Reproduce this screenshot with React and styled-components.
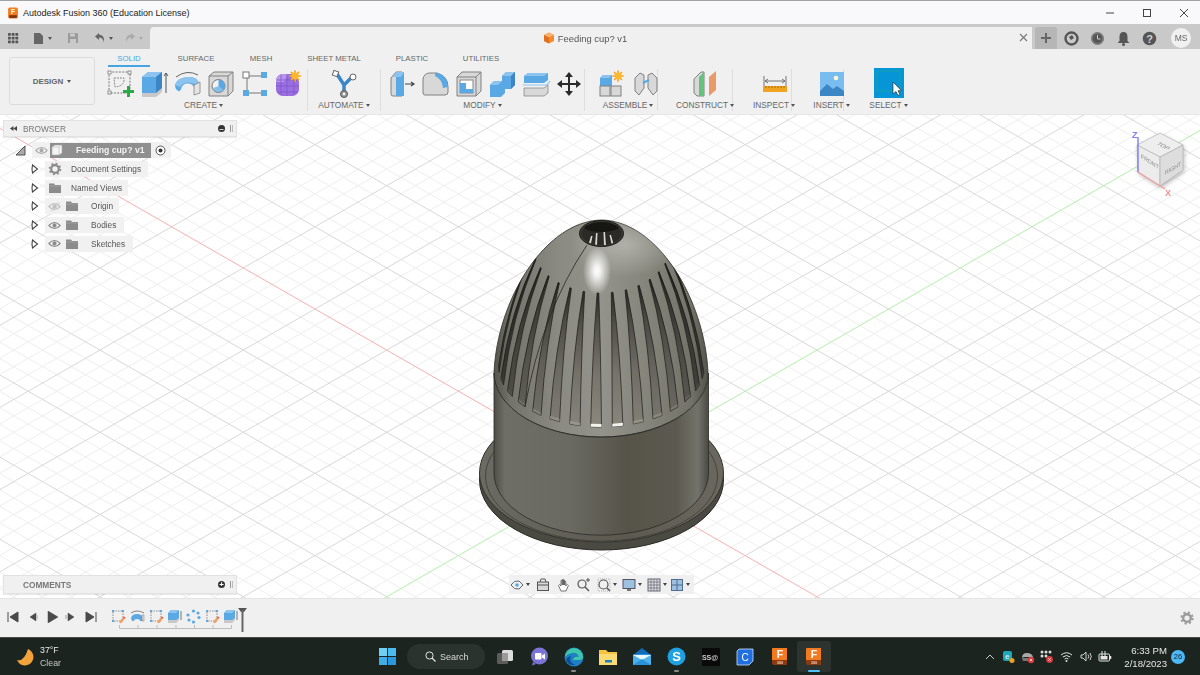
import styled, { createGlobalStyle } from 'styled-components'

const GlobalStyle = createGlobalStyle`
  html, body {
    margin: 0;
    padding: 0;
    background: #fff;
    font-family: "Liberation Sans", Arial, sans-serif;
  }
`;

const Page = styled.div`
  width: 1200px;
  height: 675px;
  display: flex;
  flex-direction: column;
  overflow: hidden;
  filter: blur(0.35px);
`;

/* ---------- title bar ---------- */
const TitleBar = styled.div`
  height: 23px;
  flex: none;
  border-top: 1px solid #a2a2a2;
  background: #f9f9fb;
  display: flex;
  align-items: center;
  padding-left: 7px;
  font-size: 9px;
  color: #222;
`;

const TitleText = styled.span`
  margin-left: 4px;
`;

const WindowButtons = styled.div`
  margin-left: auto;
  margin-right: -2px;
  display: flex;
`;

const WindowButton = styled.div`
  width: 37px;
  height: 23px;
  display: flex;
  align-items: center;
  justify-content: center;
`;

/* ---------- document tab strip ---------- */
const TabStrip = styled.div`
  height: 25px;
  flex: none;
  background: #c9c9c9;
  display: flex;
`;

const QuickBar = styled.div`
  width: 150px;
  flex: none;
  display: flex;
  align-items: center;
  padding: 3px 0 0 5px;
  box-sizing: border-box;
`;

const QuickButton = styled.div`
  width: ${p => p.$w}px;
  height: 22px;
  display: flex;
  align-items: center;
  justify-content: center;
  flex: none;
`;

const Caret = styled.span`
  display: inline-block;
  width: 0;
  height: 0;
  margin-left: ${p => p.$gap ?? 3}px;
  border-left: 2.5px solid transparent;
  border-right: 2.5px solid transparent;
  border-top: 3px solid ${p => p.$color || '#555'};
  vertical-align: middle;
`;

const DocTab = styled.div`
  width: 882px;
  flex: none;
  margin-top: 3px;
  background: #f0f0f0;
  border-radius: 4px 0 0 0;
  display: flex;
  align-items: center;
  justify-content: center;
  font-size: 9.4px;
  color: #555;
  position: relative;
  padding-right: 12px;
  box-sizing: border-box;
`;

const DocName = styled.span`
  margin-left: 3px;
`;

const DocClose = styled.span`
  position: absolute;
  right: 4px;
  top: 6px;
  display: flex;
`;

const PlusButton = styled.div`
  width: 22px;
  height: 22px;
  margin: 3px 0 0 3px;
  background: #b6b6b6;
  border-radius: 2px 2px 0 0;
  display: flex;
  align-items: center;
  justify-content: center;
`;

const UserBar = styled.div`
  display: flex;
  align-items: center;
  gap: 11px;
  padding: 3px 0 0 7px;
`;

const Avatar = styled.div`
  width: 20px;
  height: 20px;
  margin-left: 3px;
  border-radius: 50%;
  background: #f0f0f0;
  color: #666;
  font-size: 8.5px;
  display: flex;
  align-items: center;
  justify-content: center;
`;

/* ---------- ribbon ---------- */
const Ribbon = styled.div`
  height: 66px;
  flex: none;
  background: #f0f0f0;
  border-bottom: 1px solid #e6e6e6;
  box-sizing: border-box;
  display: flex;
  position: relative;
  z-index: 1;
`;

const DesignButton = styled.div`
  width: 86px;
  height: 48px;
  margin: 8px 0 0 9px;
  flex: none;
  box-sizing: border-box;
  border: 1px solid #dcdcdc;
  border-radius: 3px;
  display: flex;
  align-items: center;
  justify-content: center;
  font-size: 8px;
  font-weight: bold;
  color: #666;
`;

const RibbonMain = styled.div`
  margin-left: 5px;
  display: flex;
  flex-direction: column;
`;

const TabsRow = styled.div`
  height: 18px;
  display: flex;
  margin-left: 8px;
`;

const RibbonTab = styled.div`
  width: ${p => p.$w}px;
  height: 18px;
  box-sizing: border-box;
  padding-top: 5px;
  text-align: center;
  font-size: 7.8px;
  color: ${p => p.$active ? '#45a5e2' : '#666'};
  border-bottom: 2px solid ${p => p.$active ? '#45a5e2' : 'transparent'};
`;

const ToolsRow = styled.div`
  display: flex;
`;

const ToolGroup = styled.div`
  width: ${p => p.$w}px;
  height: 42px;
  margin-top: 2px;
  padding-left: ${p => p.$pad || 0}px;
  box-sizing: border-box;
  flex: none;
  border-right: 1px solid ${p => p.$last ? 'transparent' : '#dedede'};
  display: flex;
  flex-direction: column;
  align-items: center;
`;

const ToolIcons = styled.div`
  height: 29px;
  display: flex;
  align-items: flex-start;
  justify-content: center;
  margin-left: ${p => p.$shift || 0}px;
`;

const Tool = styled.div`
  width: ${p => p.$w || 33.5}px;
  height: 28px;
  display: flex;
  justify-content: center;
  flex: none;
`;

const ToolLabel = styled.div`
  font-size: 8.3px;
  color: #666;
  margin-top: 2px;
  white-space: nowrap;
`;

/* ---------- viewport ---------- */
const Viewport = styled.div`
  flex: 1;
  position: relative;
  background: #fff;
  overflow: hidden;
`;

const Scene = styled.svg`
  position: absolute;
  inset: 0;
  display: block;
`;

const Panel = styled.div`
  position: absolute;
  left: 3px;
  width: 234px;
  box-sizing: border-box;
  background: #f0f0f0;
  border: 1px solid #e2e2e2;
  box-shadow: 0 1px 1px rgba(0, 0, 0, 0.08);
  display: flex;
  align-items: center;
  font-size: 8.3px;
  color: #777;
  padding-right: 3px;
`;

const BrowserPanel = styled(Panel)`
  top: 5px;
  height: 17px;
`;

const CommentsPanel = styled(Panel)`
  bottom: 4px;
  height: 19px;
  font-weight: bold;
`;

const PanelTitle = styled.span`
  margin-left: ${p => p.$indent}px;
`;

const PanelRound = styled.span`
  margin-left: auto;
  width: 7px;
  height: 7px;
  margin-right: 5px;
  border-radius: 50%;
  background: #333;
  color: #fff;
  font-size: 8px;
  line-height: 7px;
  font-weight: bold;
  text-align: center;
`;

const PanelGrip = styled.span`
  width: 1px;
  height: 7px;
  border-left: 1px solid #999;
  border-right: 1px solid #bbb;
`;

const Tree = styled.div`
  position: absolute;
  left: 15px;
  top: 27px;
  display: flex;
  flex-direction: column;
  gap: 2.75px;
`;

const TreeRow = styled.div`
  height: 16px;
  display: flex;
  align-items: center;
  padding-left: ${p => p.$indent || 0}px;
`;

const TreeArrow = styled.span`
  width: ${p => p.$w}px;
  display: flex;
  flex: none;
`;

const TreeChip = styled.div`
  height: 16px;
  display: flex;
  align-items: center;
  background: rgba(240, 240, 240, 0.9);
  font-size: 8.3px;
  color: #555;
  padding: 0 ${p => p.$pad ?? 5}px 0 1px;
`;

const IconSlot = styled.span`
  width: ${p => p.$w}px;
  display: flex;
  justify-content: center;
  flex: none;
`;

const RootLabel = styled.span`
  width: 101px;
  height: 15px;
  background: #8f8f8f;
  color: #f4f4f4;
  font-weight: bold;
  font-size: 8.7px;
  display: flex;
  align-items: center;
`;

const RootName = styled.span`
  margin-left: 12px;
`;

const NavBar = styled.div`
  position: absolute;
  left: 509px;
  bottom: 4px;
  height: 19px;
  width: 185px;
  background: #f0f0f0;
  display: flex;
  align-items: center;
  padding-left: 1px;
  box-sizing: border-box;
`;

const NavItem = styled.div`
  width: ${p => p.$w}px;
  display: flex;
  align-items: center;
  flex: none;
`;

/* ---------- timeline ---------- */
const Timeline = styled.div`
  height: 39px;
  flex: none;
  background: #f0f0f0;
  border-top: 1px solid #e4e4e4;
  box-sizing: border-box;
  display: flex;
  position: relative;
`;

const Player = styled.div`
  display: flex;
  padding: 12px 0 0 3px;
`;

const PlayerButton = styled.div`
  width: 19.5px;
  height: 18px;
  display: flex;
  justify-content: center;
  flex: none;
`;

const TimelineTrack = styled.div`
  margin-left: 9px;
  padding-top: 10px;
  display: flex;
  position: relative;
`;

const TimelineItem = styled.div`
  width: 18.7px;
  display: flex;
  justify-content: center;
  flex: none;
`;

const TrackMarks = styled.svg`
  position: absolute;
  left: 0;
  top: 0;
`;

const TimelineGear = styled.div`
  margin-left: auto;
  padding: 12px 6px 0 0;
`;

/* ---------- taskbar ---------- */
const Taskbar = styled.div`
  height: 38px;
  flex: none;
  background: #1c2420;
  border-top: 1px solid #4a4a4a;
  box-sizing: border-box;
  display: flex;
  align-items: center;
  color: #eee;
`;

const Weather = styled.div`
  width: 370px;
  flex: none;
  display: flex;
  align-items: center;
  padding-left: 15px;
  box-sizing: border-box;
  font-size: 8.8px;
  line-height: 12.5px;
`;

const WeatherText = styled.div`
  margin-left: 5px;
  color: #e8e8e8;
`;

const WeatherSub = styled.div`
  color: #c6c6c6;
`;

const TaskCell = styled.div`
  width: ${p => p.$w || 34.3}px;
  height: 31px;
  flex: none;
  border-radius: 3px;
  background: ${p => p.$active ? '#2d3430' : 'transparent'};
  display: flex;
  align-items: center;
  justify-content: center;
  position: relative;
`;

const RunDot = styled.span`
  position: absolute;
  left: 50%;
  bottom: 0;
  width: ${p => p.$active ? 12 : 5}px;
  height: 2px;
  margin-left: ${p => p.$active ? -6 : -2.5}px;
  border-radius: 1px;
  background: ${p => p.$active ? '#4cc2ff' : '#8a8a8a'};
`;

const SearchPill = styled.div`
  width: 78px;
  height: 25px;
  margin: 0 3px;
  flex: none;
  box-sizing: border-box;
  border-radius: 13px;
  background: #2b332f;
  display: flex;
  align-items: center;
  padding-left: 18px;
  gap: 4px;
  font-size: 9px;
  color: #d8d8d8;
`;

const Tray = styled.div`
  margin-left: auto;
  display: flex;
  align-items: center;
  padding-right: 15px;
`;

const TrayIcon = styled.div`
  width: 19.3px;
  display: flex;
  justify-content: center;
  flex: none;
`;

const Clock = styled.div`
  width: 52px;
  text-align: right;
  font-size: 9.6px;
  line-height: 13px;
  color: #e6e6e6;
`;

const Badge = styled.div`
  width: 14px;
  height: 14px;
  margin-left: 4px;
  border-radius: 50%;
  background: #4cb8f5;
  color: #14222c;
  font-size: 7.6px;
  display: flex;
  align-items: center;
  justify-content: center;
`;

/* ---------- small drawings ---------- */
const Icon = ({ s = 30, vb = 30, children }) => (
  <svg width={s} height={s} viewBox={`0 0 ${vb} ${vb}`} style={{ display: 'block' }}>{children}</svg>
)

const BLUE = '#5aa8e4'
const DBLUE = '#3d86c6'
const LBLUE = '#8cc4ef'
const GR = '#d8d8d8'
const OUT = '#808080'

const FusionLogo = ({ s = 12 }) => (
  <Icon s={s} vb={22}>
    <rect x="2" y="1" width="18" height="20" rx="3" fill="#f47a1f" />
    <rect x="4" y="15" width="14" height="5" fill="#7e3410" />
    <text x="11" y="13" fontSize="12" fontWeight="bold" fill="#fff" textAnchor="middle" fontFamily="Liberation Sans">F</text>
  </Icon>
)

const CubeIcon = () => (
  <Icon s={12} vb={12}>
    <path d="M6 .5 11 3v6l-5 2.500L1 9V3z" fill="#f28a32" />
    <path d="M6 .5 11 3 6 5.500 1 3z" fill="#f9b26d" />
    <path d="M1 3l5 2.500v6L1 9z" fill="#e06e1a" />
  </Icon>
)

const SketchIco = () => (
  <Icon>
    <rect x="3" y="3" width="21" height="21" fill="none" stroke="#777" strokeDasharray="2 1.300" />
    <path d="M8 9h10q1 8-9 9z" fill="none" stroke="#888" strokeDasharray="2 1" />
    {[[2, 2], [22, 2], [2, 22]].map(([x, y]) => <rect key={x + '' + y} x={x} y={y} width="3" height="3" fill="#fff" stroke="#666" strokeWidth=".7" />)}
    <path d="M21 17h3v4h4v3h-4v4h-3v-4h-4v-3h4z" fill="#2aa84a" />
  </Icon>
)

const ExtrudeIco = () => (
  <Icon>
    <path d="M3 8l6-5h14v19l-6 5H3z" fill={BLUE} />
    <path d="M3 8l6-5h14l-6 5z" fill={LBLUE} />
    <path d="M17 8l6-5v19l-6 5z" fill={DBLUE} />
    <path d="M3 24h14l6-5v4l-6 5H3z" fill="#c8c8c8" />
    <path d="M27 24V4m-2 3 2-3 2 3" fill="none" stroke="#555" />
  </Icon>
)

const SweepIco = () => (
  <Icon>
    <path d="M3 8Q14 0 25 6" fill="none" stroke="#666" strokeWidth="1" />
    <path d="M2 16q2-7 12-8t12 6l-5 4q-2-4-7-3.500t-6 6l-2 2q-4-2-4-6.500z" fill={BLUE} />
    <path d="M2 16q2-7 12-8t12 6l-5 1q-3-2-7-1.500t-7 4.500z" fill={LBLUE} />
    <path d="M21 16l6-3v11l-6 2z" fill="#e4e4e4" stroke="#777" strokeWidth=".7" />
  </Icon>
)

const HoleIco = () => (
  <Icon>
    <path d="M3 7l5-4h19v19l-5 5H3z" fill={GR} stroke={OUT} />
    <path d="M3 7h19v20M22 7l5-4" fill="none" stroke={OUT} />
    <circle cx="12.500" cy="17" r="6.500" fill="#f2f2f2" stroke="#777" />
    <path d="M12.500 17v-6.500a6.500 6.500 0 0 1 5 10.500z" fill={BLUE} />
    <path d="M7 19a6 6 0 0 0 11 1l-5-3z" fill={BLUE} opacity=".7" />
  </Icon>
)

const FormIco = () => (
  <Icon>
    <path d="M7 7h17M7 7v17M7 24h17" stroke="#777" fill="none" />
    <rect x="3" y="3" width="6" height="6" fill="#fff" stroke="#777" />
    <rect x="21" y="3" width="6" height="6" fill={BLUE} />
    <rect x="3" y="21" width="6" height="6" fill={BLUE} />
    <rect x="21" y="21" width="6" height="6" fill={BLUE} />
  </Icon>
)

const Sun = ({ x, y, r = 4 }) => (
  <g>
    {[0, 45, 90, 135].map(a => (
      <rect key={a} x={x - 0.8} y={y - r * 1.6} width="1.600" height={r * 3.2} fill="#f5a623" transform={`rotate(${a} ${x} ${y})`} />
    ))}
    <circle cx={x} cy={y} r={r} fill="#fbb82f" />
  </g>
)

const PurpleIco = () => (
  <Icon>
    <path d="M3 11q1-5 6-6h10q6 2 7 8v8q-1 5-6 6H9q-5-1-6-6z" fill="#9a6fe0" />
    <path d="M3 11q1-5 6-6h6l-4 8H3z" fill="#b896ec" />
    <path d="M3 17h23M14 5v22M8 6v20M21 6v20M4 11h21M4 23h21" stroke="#7f55c8" strokeWidth=".7" fill="none" />
    <Sun x={22} y={7} r={3.600} />
  </Icon>
)

const AutomateIco = () => (
  <Icon>
    <path d="M8 5l7 11 8-8M15 16v8" stroke={DBLUE} strokeWidth="3.500" fill="none" />
    <rect x="4" y="2" width="5" height="5" fill="#fff" stroke="#666" transform="rotate(20 6.500 4.500)" />
    <circle cx="24" cy="8" r="3" fill="#fff" stroke="#666" />
    <circle cx="15" cy="25" r="3.500" fill="#9a9a9a" stroke="#555" />
    <circle cx="15" cy="25" r="1.300" fill="#fff" />
  </Icon>
)

const PressIco = () => (
  <Icon>
    <path d="M4 9l5-6h6v24H6q-2 0-2-2z" fill={GR} stroke={OUT} />
    <path d="M9 3h8v24H9z" fill={BLUE} />
    <path d="M9 3h8l-3 5H6z" fill={LBLUE} />
    <path d="M18 15h9m-3-2 3 2-3 2" stroke="#444" strokeWidth="1.200" fill="none" />
  </Icon>
)

const FilletIco = () => (
  <Icon>
    <path d="M3 10q1-6 7-6h7q11 3 11 14v5q0 3-3 3H5q-2 0-2-2z" fill={GR} stroke={OUT} />
    <path d="M15 4h3q10 3 10 14l-5 1q-1-9-8-12z" fill={BLUE} />
  </Icon>
)

const ShellIco = () => (
  <Icon>
    <path d="M3 8l5-5h19v19l-5 5H3z" fill={GR} stroke={OUT} />
    <path d="M3 8h19v19M22 8l5-5" stroke={OUT} fill="none" />
    <rect x="6" y="11" width="13" height="13" fill="#fff" stroke="#888" />
    <path d="M6 14h6v6h7v4H6z" fill={BLUE} />
  </Icon>
)

const CombineIco = () => (
  <Icon>
    <path d="M3 16l4-4h8V7l4-4h9v13l-4 4h-6v4l-4 4H3z" fill={BLUE} />
    <path d="M15 7l4-4h9l-4 4zM3 16l4-4h8l-4 4z" fill={LBLUE} />
    <path d="M24 7l4-4v13l-4 4z" fill={DBLUE} />
  </Icon>
)

const SplitIco = () => (
  <Icon>
    <path d="M3 7l4-3h20v7l-4 3H3z" fill={BLUE} />
    <path d="M3 7l4-3h20l-4 3z" fill={LBLUE} />
    <path d="M2 16 26 16l3-4" stroke="#8cc4ef" strokeWidth="1.200" fill="none" />
    <path d="M3 19h20l4-3v8l-4 3H3z" fill={GR} stroke={OUT} strokeWidth=".7" />
  </Icon>
)

const MoveIco = () => (
  <Icon>
    <path d="M15 3l4 5h-3v6h6v-3l5 4-5 4v-3h-6v6h3l-4 5-4-5h3v-6H8v3l-5-4 5-4v3h6V8h-3z" fill="#2b2b2b" />
  </Icon>
)

const ComponentIco = () => (
  <Icon>
    <path d="M2 9l3-3h9v11H2z" fill={BLUE} />
    <path d="M2 9l3-3h9l-3 3z" fill={LBLUE} />
    <rect x="2" y="17" width="10" height="10" fill={GR} stroke={OUT} />
    <rect x="13" y="17" width="10" height="10" fill={GR} stroke={OUT} />
    <Sun x={20} y={7} r={3.500} />
  </Icon>
)

const JointIco = () => (
  <Icon>
    <path d="M4 9l5-5 4 2v13l-5 7-4-4z" fill={GR} stroke={OUT} />
    <path d="M26 9l-5-5-4 2v13l5 7 4-4z" fill={GR} stroke={OUT} />
    <path d="M12 14l6-3" stroke={BLUE} strokeWidth="2" />
  </Icon>
)

const ConstructIco = () => (
  <Icon>
    <path d="M3 10l7-7h3v24H6l-3-3z" fill={GR} stroke={OUT} />
    <path d="M8 8l5-5v24H8z" fill="#62c27e" />
    <path d="M18 8l7-6v19l-7 6z" fill="#e89a68" />
  </Icon>
)

const InspectIco = () => (
  <Icon>
    <path d="M4 7v11M26 7v11M5 12h20M5 12l3-2m-3 2 3 2M25 12l-3-2m3 2-3 2" stroke="#666" fill="none" strokeWidth=".9" />
    <rect x="3" y="17" width="24" height="6" fill="#f0a420" />
    <path d="M6 17v2M9 17v2M12 17v2M15 17v2M18 17v2M21 17v2M24 17v2" stroke="#8a5a10" strokeWidth=".7" />
  </Icon>
)

const InsertIco = () => (
  <Icon>
    <rect x="3" y="3" width="24" height="24" fill="#79bdf0" />
    <path d="M3 22l7-7 6 5 4-3 7 5v5H3z" fill="#3d86c6" />
    <circle cx="19" cy="9" r="2.300" fill="#fdf5d8" />
  </Icon>
)

const SelectBox = styled.div`
  width: 30px;
  height: 30px;
  background: #0696d7;
  position: relative;
  margin-top: -1px;
`;

const SelectIco = () => (
  <SelectBox>
    <Icon>
      <rect x="3" y="3" width="23" height="20" fill="none" stroke="#2fae74" strokeDasharray="1.500 1.200" strokeWidth=".8" />
      <path d="M19 14v12l3-2.500 2 4 2-1-2-3.800h3.500z" fill="#fff" stroke="#333" strokeWidth=".7" />
    </Icon>
  </SelectBox>
)

const smallStroke = { fill: 'none', stroke: '#555', strokeWidth: 1.1 }

const Eye = ({ off, color = '#8c8c8c' }) => (
  <Icon s={13} vb={14}>
    <path d="M1 7q6-6.500 12 0-6 6.500-12 0z" fill={off ? 'none' : '#fff'} stroke={color} strokeWidth="1.300" />
    <circle cx="7" cy="7" r="2.300" fill={color} />
    {off && <path d="M3 12l8-10M5 12l8-9" stroke={color} strokeWidth=".7" />}
  </Icon>
)

const Folder = () => (
  <Icon s={14} vb={14}>
    <path d="M1 2.500h5l1 1.500h6v8H1z" fill="#8c8c8c" />
    <path d="M1 5h12" stroke="#b0b0b0" strokeWidth=".6" />
  </Icon>
)

const Triangle = () => (
  <Icon s={10} vb={10}>
    <path d="M1 5 1.500 1l5 4-5 4z" fill="#fff" stroke="#444" strokeWidth="1.100" />
  </Icon>
)

const TreeGear = () => (
  <Icon s={14} vb={14}>
    <circle cx="7" cy="7" r="3.800" fill="none" stroke="#8a8a8a" strokeWidth="2.200" />
    <circle cx="7" cy="7" r="5.500" fill="none" stroke="#8a8a8a" strokeWidth="1.600" strokeDasharray="2 2.300" />
  </Icon>
)

const Gear = ({ color = '#9a9a9a' }) => (
  <Icon s={14} vb={14}>
    <circle cx="7" cy="7" r="3.800" fill="none" stroke={color} strokeWidth="2.400" />
    <circle cx="7" cy="7" r="5.700" fill="none" stroke={color} strokeWidth="1.800" strokeDasharray="2.200 2.300" />
  </Icon>
)

const PLAYER = [
  'M1 1v10M11 1 3 6l8 5z',
  'M12 4v4M10 2 4 6l6 4z',
  'M2 0l10 6-10 6z',
  'M1 4v4M3 2l6 4-6 4z',
  'M11 1v10M1 1l8 5-8 5z',
]

const TlSketch = () => (
  <Icon s={15} vb={15}>
    <rect x="2" y="2" width="10" height="10" fill="none" stroke="#777" strokeWidth=".8" strokeDasharray="1.500 1" />
    {[[1, 1], [11, 1], [1, 11]].map(([x, y]) => <rect key={x + '' + y} x={x} y={y} width="2" height="2" fill={BLUE} />)}
    <path d="M8 13l4-5 2 1.500-4 5z" fill="#f0a060" />
    <path d="M13 7.500l1.500 1-1 1-1.500-1z" fill="#e04b4b" />
  </Icon>
)

const TlSweep = () => (
  <Icon s={15} vb={15}>
    <path d="M1 4Q7 0 14 4" fill="none" stroke="#666" strokeWidth=".8" />
    <path d="M1 9q1-4 6-4t6 4v3H10q0-2-3-2t-3 2H2z" fill={BLUE} />
    <rect x="12" y="6" width="2" height="6" fill="#ddd" stroke="#777" strokeWidth=".5" />
  </Icon>
)

const TlExtrude = () => (
  <Icon s={15} vb={15}>
    <path d="M1 4l3-3h8v9l-3 3H1z" fill={BLUE} />
    <path d="M1 4l3-3h8L9 4z" fill={LBLUE} />
    <path d="M1 11h8l3-2v2l-3 3H1z" fill="#c8c8c8" />
    <path d="M14 11V2" stroke="#555" strokeWidth=".8" />
  </Icon>
)

const TlPattern = () => (
  <Icon s={15} vb={15}>
    {[[7.500, 2], [12, 4], [13, 8.500], [7.500, 13], [3, 11], [2, 6]].map(([x, y]) => (
      <circle key={x} cx={x} cy={y} r="1.600" fill={BLUE} />
    ))}
  </Icon>
)

const Chevron = () => (
  <Icon s={10} vb={10}><path d="M1 7l4-4 4 4" fill="none" stroke="#ddd" strokeWidth=".9" /></Icon>
)

/* ---------- 3d scene ---------- */
const ORIGIN = { x: 601.8, y: 473.4 }
const A = { x: 71.7, y: 41.1 }
const B = { x: 71.7, y: -41.1 }
const DIVS = 5

function gridLines() {
  const out = []
  const far = 30
  for (let i = -far * DIVS; i <= far * DIVS; i++) {
    const major = i % DIVS === 0
    const t = i / DIVS
    const a1 = { x: ORIGIN.x + A.x * t - B.x * far, y: ORIGIN.y + A.y * t - B.y * far }
    const a2 = { x: ORIGIN.x + A.x * t + B.x * far, y: ORIGIN.y + A.y * t + B.y * far }
    const b1 = { x: ORIGIN.x + B.x * t - A.x * far, y: ORIGIN.y + B.y * t - A.y * far }
    const b2 = { x: ORIGIN.x + B.x * t + A.x * far, y: ORIGIN.y + B.y * t + A.y * far }
    if (i === 0) continue
    out.push({ p: a1, q: a2, major })
    out.push({ p: b1, q: b2, major })
  }
  return out.sort((l, r) => Number(l.major) - Number(r.major))
}

const rad = d => (d * Math.PI) / 180
const SLOT_ANGLES = Array.from({ length: 15 }, (_, i) => -87 + 12 * i)
const DOME = 'M494 373C497 300 545 221 601.5 220 658 221 705 300 708 373A107 64 0 0 1 494 373Z'

function slotPath(deg) {
  const cx = 601.5
  const bot = d => ({ x: cx + 103 * Math.sin(rad(d)), y: 366 + 61 * Math.cos(rad(d)) })
  const top = d => ({ x: cx + 68 * Math.sin(rad(d)), y: 247 + 46 * Math.cos(rad(d)) })
  const bl = bot(deg - 3)
  const br = bot(deg + 3)
  const tl = top(deg - 0.7)
  const tr = top(deg + 0.7)
  const ctrl = (b, t) => `${(b.x + (t.x - b.x) * 0.25).toFixed(1)} ${(t.y + (b.y - t.y) * 0.45).toFixed(1)}`
  return {
    body: `M${tl.x.toFixed(1)} ${tl.y.toFixed(1)} Q${ctrl(bl, tl)} ${bl.x.toFixed(1)} ${bl.y.toFixed(1)} L${br.x.toFixed(1)} ${br.y.toFixed(1)} Q${ctrl(br, tr)} ${tr.x.toFixed(1)} ${tr.y.toFixed(1)} Z`,
    ledge: `M${bl.x.toFixed(1)} ${(bl.y - 3).toFixed(1)} L${br.x.toFixed(1)} ${(br.y - 3).toFixed(1)} L${br.x.toFixed(1)} ${br.y.toFixed(1)} L${bl.x.toFixed(1)} ${bl.y.toFixed(1)} Z`,
  }
}

const Cup = () => (
  <g>
    <defs>
      <linearGradient id="domeFill" x1="0" x2="1" y1="0" y2="0">
        <stop offset="0" stopColor="#55544c" />
        <stop offset=".08" stopColor="#75746c" />
        <stop offset=".3" stopColor="#8b8a82" />
        <stop offset=".5" stopColor="#94938b" />
        <stop offset=".72" stopColor="#85847b" />
        <stop offset=".92" stopColor="#74736a" />
        <stop offset="1" stopColor="#55544c" />
      </linearGradient>
      <linearGradient id="slotFill" x1="0" x2="0" y1="0" y2="1">
        <stop offset="0" stopColor="#2c2b27" />
        <stop offset=".25" stopColor="#55534b" />
        <stop offset=".6" stopColor="#77756c" />
        <stop offset="1" stopColor="#8b897f" />
      </linearGradient>
      <linearGradient id="wallFill" x1="0" x2="1" y1="0" y2="0">
        <stop offset="0" stopColor="#4e4d46" />
        <stop offset=".05" stopColor="#6f6e66" />
        <stop offset=".35" stopColor="#6b6a62" />
        <stop offset=".62" stopColor="#565449" />
        <stop offset=".85" stopColor="#5c5a50" />
        <stop offset=".95" stopColor="#74736b" />
        <stop offset="1" stopColor="#4a4942" />
      </linearGradient>
      <linearGradient id="flangeFill" x1="0" x2="1" y1="0" y2="0">
        <stop offset="0" stopColor="#6c6b63" />
        <stop offset=".6" stopColor="#5b5950" />
        <stop offset="1" stopColor="#6a685f" />
      </linearGradient>
      <radialGradient id="spec">
        <stop offset="0" stopColor="#fff" />
        <stop offset=".25" stopColor="#fff" stopOpacity=".85" />
        <stop offset="1" stopColor="#fff" stopOpacity="0" />
      </radialGradient>
      <radialGradient id="sheen">
        <stop offset="0" stopColor="#c4c3bc" stopOpacity=".65" />
        <stop offset="1" stopColor="#c4c3bc" stopOpacity="0" />
      </radialGradient>
      <clipPath id="holeClip"><ellipse cx="601.5" cy="233.500" rx="20" ry="11.500" /></clipPath>
      <clipPath id="domeClip"><path d={DOME} /></clipPath>
    </defs>

    <ellipse cx="601.5" cy="480" rx="122" ry="70" fill="#4a4942" stroke="#2a2a25" />
    <ellipse cx="601.5" cy="473" rx="122" ry="69" fill="url(#flangeFill)" stroke="#33322c" />
    <ellipse cx="601.5" cy="476" rx="116" ry="65" fill="none" stroke="#46453e" />

    <path d={DOME} fill="url(#domeFill)" stroke="#2a2a25" strokeWidth=".8" />
    <g clipPath="url(#domeClip)">
      <ellipse cx="625" cy="245" rx="55" ry="32" fill="url(#sheen)" />
      <ellipse cx="597" cy="271" rx="14" ry="24" fill="url(#spec)" />
      {SLOT_ANGLES.map(d => {
        const { body, ledge } = slotPath(d)
        const bright = d === -3 || d === 9
        return (
          <g key={d}>
            <path d={body} fill="url(#slotFill)" stroke="#1c1c19" strokeWidth=".7" />
            <path d={body} fill="#141412" opacity={Math.min(0.7, Math.pow(Math.abs(d) / 90, 1.8))} />
            <path d={ledge} fill={bright ? '#f2f2ee' : '#9d9b90'} opacity={bright ? 1 : Math.max(0.15, 1 - Math.abs(d) / 70)} />
          </g>
        )
      })}
    </g>
    <path d="M587 245Q542 312 525 407" fill="none" stroke="#27271f" strokeWidth=".8" />

    <path d="M494 373V473A107 62 0 0 0 708.500 473V373A107 64 0 0 1 494 373Z" fill="url(#wallFill)" stroke="#2a2a25" strokeWidth=".8" />

    <ellipse cx="601.5" cy="233.500" rx="22" ry="13" fill="#3a3934" stroke="#1a1a17" />
    <ellipse cx="601.5" cy="233.500" rx="20" ry="11.500" fill="#2b2a26" />
    <g clipPath="url(#holeClip)">
      <path d="M588 246l3-10h1.500l-2 10zM595 246l1-13h1.500l-.5 13zM604 246l-.5-14H605l1 14zM612 246l-2.500-11h1.500l3 11z" fill="#d8d8d2" />
      <ellipse cx="601.5" cy="226" rx="18" ry="6" fill="#161613" />
    </g>
  </g>
)

const ViewCube = () => (
  <g>
    <g style={{ filter: 'drop-shadow(1px 2px 2px rgba(0,0,0,.25))' }}>
      <path d="M1137 145 1160 133 1183 145 1160 157Z" fill="#eeeeee" stroke="#b5b5b5" strokeWidth=".7" />
      <path d="M1137 145 1160 157V186L1138 172Z" fill="#ececec" stroke="#b5b5b5" strokeWidth=".7" />
      <path d="M1160 157 1183 145V170L1160 186Z" fill="#dddddd" stroke="#b0b0b0" strokeWidth=".7" />
    </g>
    <text fontSize="6" fill="#888" fontFamily="Liberation Sans" transform="matrix(.9 .5 -.9 .5 1156 144)">TOP</text>
    <text fontSize="6" fill="#888" fontFamily="Liberation Sans" transform="matrix(.86 .55 0 1 1141 158)">FRONT</text>
    <text fontSize="6" fill="#888" fontFamily="Liberation Sans" transform="matrix(.86 -.5 0 1 1165 175)">RIGHT</text>
    <path d="M1138 172V137" stroke="#7f7ff0" strokeWidth="1.400" />
    <path d="M1138 172 1165 189" stroke="#f2a0a0" strokeWidth="1.400" />
    <text x="1132" y="138" fontSize="9" fontWeight="bold" fill="#7f7ff0" fontFamily="Liberation Sans">Z</text>
    <text x="1165" y="196" fontSize="9" fontWeight="bold" fill="#f09090" fontFamily="Liberation Sans">X</text>
  </g>
)

const axisEnd = (v, t) => ({ x: ORIGIN.x + v.x * t, y: ORIGIN.y + v.y * t })
const redA = axisEnd(A, -12)
const redB = axisEnd(A, 12)
const greenA = axisEnd(B, -12)
const greenB = axisEnd(B, 12)

const TOOLS = [
  { label: 'CREATE', w: 208, shift: 2, tools: [SketchIco, ExtrudeIco, SweepIco, HoleIco, FormIco, PurpleIco] },
  { label: 'AUTOMATE', w: 73, tools: [AutomateIco] },
  { label: 'MODIFY', w: 204, shift: 6, tools: [PressIco, FilletIco, ShellIco, CombineIco, SplitIco, MoveIco] },
  { label: 'ASSEMBLE', w: 73, pad: 14, shift: 3, tools: [ComponentIco, JointIco] },
  { label: 'CONSTRUCT', w: 75, pad: 20, shift: 1, tools: [ConstructIco] },
  { label: 'INSPECT', w: 59, pad: 24, shift: 2, tools: [InspectIco] },
  { label: 'INSERT', w: 52, pad: 28, shift: 0, tools: [InsertIco] },
  { label: 'SELECT', w: 90, last: true, tools: [SelectIco] },
]

const TABS = [
  ['SOLID', 42, true], ['SURFACE', 92], ['MESH', 38], ['SHEET METAL', 108], ['PLASTIC', 48], ['UTILITIES', 90],
]

const TREE = [
  { name: 'Document Settings', eye: false, icon: <TreeGear />, pad: 7 },
  { name: 'Named Views', eye: false, icon: <Folder />, pad: 6 },
  { name: 'Origin', eye: 'off', icon: <Folder />, pad: 6 },
  { name: 'Bodies', eye: 'on', icon: <Folder />, pad: 8 },
  { name: 'Sketches', eye: 'on', icon: <Folder />, pad: 8 },
]

const TaskIcons = [
  <Icon s={18} vb={18} key="view">
    <rect x="1" y="5" width="11" height="11" rx="1.500" fill="#5c5c5c" />
    <rect x="6" y="2" width="11" height="11" rx="1.500" fill="#e8e8e8" opacity=".95" />
    <rect x="6" y="5" width="6" height="8" fill="#9a9a9a" />
  </Icon>,
  <Icon s={19} vb={19} key="meet">
    <circle cx="9.500" cy="9" r="8.500" fill="#7b74d6" />
    <path d="M3 15l-1 3.500 4-1.500z" fill="#7b74d6" />
    <rect x="5" y="6" width="6.500" height="6.500" rx="1" fill="#fff" />
    <path d="M12 8.500 15 6.500v6l-3-2z" fill="#fff" />
  </Icon>,
  <Icon s={20} vb={20} key="edge">
    <circle cx="10" cy="10" r="9.500" fill="#1f7fc4" />
    <path d="M1 10a9 9 0 0 1 18 0q0 3-4 3H9q1-4 6-3-2-5-7-4T1 10z" fill="#3ec6a8" />
    <path d="M7 9q-3 6 4 9-7 1-9-5 1-3 5-4z" fill="#0c4f94" />
  </Icon>,
  <Icon s={20} vb={20} key="folder">
    <path d="M1 3h7l2 2h9v12H1z" fill="#f5c242" />
    <path d="M1 7h18v11H1z" fill="#fbdc72" />
    <rect x="7" y="13" width="7" height="2.500" fill="#1f7fc4" />
  </Icon>,
  <Icon s={20} vb={20} key="mail">
    <path d="M1 8l9-7 9 7v10H1z" fill="#0f6cbd" />
    <path d="M1 7.500h18V18H1z" fill="#4db2ea" />
    <path d="M1 8l9 5 9-5v0H1z" fill="#e8f5fd" />
    <path d="M1 18l9-6 9 6z" fill="#2a92d8" />
  </Icon>,
  <Icon s={19} vb={19} key="skype">
    <circle cx="9.500" cy="9.500" r="9" fill="#1fa0e0" />
    <text x="9.500" y="14" fontSize="13" fontWeight="bold" fill="#fff" textAnchor="middle" fontFamily="Liberation Sans">S</text>
  </Icon>,
  <Icon s={18} vb={18} key="sso">
    <rect width="18" height="18" fill="#0a0a0a" />
    <text x="8" y="11.500" fontSize="7" fontWeight="bold" fill="#cfcfcf" textAnchor="middle" fontFamily="Liberation Sans">SS@</text>
  </Icon>,
  <Icon s={18} vb={18} key="c">
    <path d="M3 1h14v12l-4 4H1V3z" fill="#1f6fe0" stroke="#cfe0fa" strokeWidth=".8" />
    <text x="9" y="12.500" fontSize="10" fill="#fff" textAnchor="middle" fontFamily="Liberation Sans">C</text>
  </Icon>,
]

const FusionTask = () => (
  <Icon s={19} vb={19}>
    <path d="M2 2q0-1 1-1h14v12H2z" fill="#f47a1f" />
    <path d="M2 13h15v5H4q-2 0-2-2z" fill="#8a3a12" />
    <text x="10" y="11" fontSize="10.500" fontWeight="bold" fill="#fff" textAnchor="middle" fontFamily="Liberation Sans">F</text>
    <text x="10" y="17" fontSize="4" fontWeight="bold" fill="#f2c8a8" textAnchor="middle" fontFamily="Liberation Sans">360</text>
  </Icon>
)

const NavIcons = [
  [26, <Icon s={14} vb={14} key="n1"><path d="M1 7q3-5 8-4l4 4-4 4q-5 1-8-4z" fill="none" stroke="#667" /><circle cx="7" cy="7" r="1.800" fill={BLUE} /></Icon>, true],
  [21, <Icon s={14} vb={14} key="n2"><rect x="1.500" y="4" width="11" height="8.500" fill="#d8d8d8" stroke="#555" /><path d="M1.500 7h11M4 4l1-3h4l1 3" stroke="#555" fill="none" /></Icon>],
  [19, <Icon s={14} vb={14} key="n3"><path d="M4 13 1.500 7.500l1-1L4 8V2.500h1.200V7V1.500h1.200V7V2h1.200v5V3.500h1.200V8l1.600-1.500 1 1L9 13z" fill="#fff" stroke="#555" strokeWidth=".8" /></Icon>],
  [21, <Icon s={14} vb={14} key="n4"><circle cx="6" cy="6" r="4" fill="none" stroke="#555" strokeWidth="1.200" /><path d="M9 9l4 4" stroke="#555" strokeWidth="1.500" /><path d="M10 2h4M12 0v4" stroke="#555" /></Icon>],
  [25, <Icon s={14} vb={14} key="n5"><circle cx="6.500" cy="6.500" r="4.500" fill="none" stroke="#555" strokeWidth="1.200" /><path d="M10 10l3 3" stroke="#555" strokeWidth="1.500" /><rect x="1" y="1" width="12" height="12" fill="none" stroke="#888" strokeDasharray="1 1" strokeWidth=".6" /></Icon>, true],
  [25, <Icon s={14} vb={14} key="n6"><rect x="1" y="1.500" width="12" height="9" fill="#9fc0e0" stroke="#556" /><path d="M5 11h4v2H5z" fill="#777" /></Icon>, true],
  [23, <Icon s={14} vb={14} key="n7"><rect x="1" y="1" width="12" height="12" fill="#ddd" stroke="#667" /><path d="M4 1v12M7 1v12M10 1v12M1 4h12M1 7h12M1 10h12" stroke="#667" strokeWidth=".7" /></Icon>, true],
  [24, <Icon s={14} vb={14} key="n8"><rect x="1.500" y="1.500" width="11" height="11" fill="#9fc0e0" stroke="#4f6f90" /><path d="M7 1.500v11M1.500 7h11" stroke="#4f6f90" /></Icon>, true],
]

function App() {
  const lines = gridLines()

  return (
    <Page>
      <GlobalStyle />
      <TitleBar>
        <FusionLogo />
        <TitleText>Autodesk Fusion 360 (Education License)</TitleText>
        <WindowButtons>
          <WindowButton><Icon s={10} vb={10}><path d="M1 5h8" stroke="#444" /></Icon></WindowButton>
          <WindowButton><Icon s={10} vb={10}><rect x="1.500" y="1.500" width="7" height="7" fill="none" stroke="#444" /></Icon></WindowButton>
          <WindowButton><Icon s={10} vb={10}><path d="M1 1l8 8M9 1l-8 8" stroke="#444" /></Icon></WindowButton>
        </WindowButtons>
      </TitleBar>

      <TabStrip>
        <QuickBar>
          <QuickButton $w={16}>
            <Icon s={12} vb={12}>
              {[1, 4.7, 8.4].flatMap(x => [1, 4.7, 8.4].map(y => <rect key={x + '' + y} x={x} y={y} width="2.800" height="2.800" rx=".5" fill="#555" />))}
            </Icon>
          </QuickButton>
          <QuickButton $w={42}>
            <Icon s={13} vb={13}><path d="M2 1h6l3 3v8H2z" fill="#666" /></Icon>
            <Caret />
          </QuickButton>
          <QuickButton $w={20}>
            <Icon s={12} vb={12}><path d="M1 1h9l1 1v9H1z" fill="#9b9b9b" /><rect x="3" y="1.500" width="5" height="3" fill="#c9c9c9" /><rect x="3" y="7" width="6" height="4" fill="#c9c9c9" /></Icon>
          </QuickButton>
          <QuickButton $w={6} />
          <QuickButton $w={28}>
            <Icon s={12} vb={12}><path d="M5 1 1 4.500 5 8V5.500q4 0 5 5 1-7.500-5-8z" fill="#666" /></Icon>
            <Caret />
          </QuickButton>
          <QuickButton $w={32}>
            <Icon s={12} vb={12}><path d="M7 1l4 3.500L7 8V5.500q-4 0-5 5-1-7.500 5-8z" fill="#aaa" /></Icon>
            <Caret $color="#aaa" />
          </QuickButton>
        </QuickBar>
        <DocTab>
          <CubeIcon />
          <DocName>Feeding cup? v1</DocName>
          <DocClose>
            <Icon s={9} vb={9}><path d="M1 1l7 7M8 1 1 8" stroke="#777" strokeWidth="1.100" /></Icon>
          </DocClose>
        </DocTab>
        <PlusButton>
          <Icon s={12} vb={12}><path d="M6 1v10M1 6h10" stroke="#666" strokeWidth="2" /></Icon>
        </PlusButton>
        <UserBar>
          <Icon s={15} vb={15}><circle cx="7.500" cy="7.500" r="6" {...smallStroke} strokeWidth="2.400" /><path d="M5 6l3-2 2 3-3 2z" fill="#555" /></Icon>
          <Icon s={15} vb={15}><circle cx="7.500" cy="7.500" r="6.500" fill="#777" /><circle cx="7.500" cy="7.500" r="4.500" fill="#555" /><path d="M7.500 4v4h3" stroke="#ccc" fill="none" /></Icon>
          <Icon s={15} vb={15}><path d="M7.500 1q4 0 4 5v4l2 2H1.500l2-2V6q0-5 4-5z" fill="#555" /><circle cx="7.500" cy="13.500" r="1.500" fill="#555" /></Icon>
          <Icon s={15} vb={15}><circle cx="7.500" cy="7.500" r="6.800" fill="#555" /><text x="7.500" y="11.500" fontSize="11" fontWeight="bold" fill="#d0d0d0" textAnchor="middle" fontFamily="Liberation Sans">?</text></Icon>
          <Avatar>MS</Avatar>
        </UserBar>
      </TabStrip>

      <Ribbon>
        <DesignButton>DESIGN<Caret $gap={4} /></DesignButton>
        <RibbonMain>
          <TabsRow>
            {TABS.map(([name, w, active]) => <RibbonTab key={name} $w={w} $active={active}>{name}</RibbonTab>)}
          </TabsRow>
          <ToolsRow>
            {TOOLS.map(g => (
              <ToolGroup key={g.label} $w={g.w} $last={g.last} $pad={g.pad}>
                <ToolIcons $shift={g.shift}>
                  {g.tools.map((T, i) => <Tool key={i}><T /></Tool>)}
                </ToolIcons>
                <ToolLabel>{g.label}<Caret $gap={2} /></ToolLabel>
              </ToolGroup>
            ))}
          </ToolsRow>
        </RibbonMain>
      </Ribbon>

      <Viewport>
        <Scene width="1200" height="483" viewBox="0 115 1200 483">
          {lines.map((l, i) => (
            <line key={i} x1={l.p.x} y1={l.p.y} x2={l.q.x} y2={l.q.y} stroke={l.major ? '#d8d8d8' : '#eeeeee'} strokeWidth="1" />
          ))}
          <line x1={redA.x} y1={redA.y} x2={redB.x} y2={redB.y} stroke="#f7b0b0" />
          <line x1={greenA.x} y1={greenA.y} x2={greenB.x} y2={greenB.y} stroke="#b2f0a8" />
          <Cup />
          <ViewCube />
        </Scene>

        <BrowserPanel>
          <PanelTitle $indent={6}>
            <Icon s={7} vb={7}><path d="M3.500 1 0 3.500 3.500 6zM7 1 3.500 3.500 7 6z" fill="#444" /></Icon>
          </PanelTitle>
          <PanelTitle $indent={6}>BROWSER</PanelTitle>
          <PanelRound>–</PanelRound>
          <PanelGrip />
        </BrowserPanel>

        <Tree>
          <TreeRow>
            <TreeArrow $w={17}>
              <Icon s={11} vb={11}><path d="M1 10 10 1v9z" fill="#aaa" stroke="#444" strokeWidth=".9" /></Icon>
            </TreeArrow>
            <TreeChip $pad={2}>
              <IconSlot $w={17}><Eye color="#aaa" /></IconSlot>
              <RootLabel>
                <Icon s={14} vb={14}><path d="M2 4l3-2h7v8l-3 2H2z" fill="#f4f4f4" stroke="#aaa" strokeWidth=".6" /><path d="M2 4h7v8M9 4l3-2" fill="none" stroke="#bbb" strokeWidth=".6" /></Icon>
                <RootName>Feeding cup? v1</RootName>
              </RootLabel>
              <IconSlot $w={18}>
                <Icon s={11} vb={11}><circle cx="5.500" cy="5.500" r="4.500" fill="#fff" stroke="#444" strokeWidth=".9" /><circle cx="5.500" cy="5.500" r="2" fill="#333" /></Icon>
              </IconSlot>
            </TreeChip>
          </TreeRow>
          {TREE.map(row => (
            <TreeRow key={row.name} $indent={16}>
              <TreeArrow $w={14}><Triangle /></TreeArrow>
              <TreeChip $pad={row.pad}>
                {row.eye && <IconSlot $w={17}><Eye off={row.eye === 'off'} color={row.eye === 'off' ? '#c0c0c0' : '#8c8c8c'} /></IconSlot>}
                <IconSlot $w={17}>{row.icon}</IconSlot>
                <PanelTitle $indent={row.eye ? 11 : 8}>{row.name}</PanelTitle>
              </TreeChip>
            </TreeRow>
          ))}
        </Tree>

        <CommentsPanel>
          <PanelTitle $indent={19}>COMMENTS</PanelTitle>
          <PanelRound>+</PanelRound>
          <PanelGrip />
        </CommentsPanel>

        <NavBar>
          {NavIcons.map(([w, ico, caret], i) => (
            <NavItem key={i} $w={w}>{ico}{caret && <Caret $gap={2} $color="#444" />}</NavItem>
          ))}
        </NavBar>
      </Viewport>

      <Timeline>
        <Player>
          {PLAYER.map((d, i) => (
            <PlayerButton key={i}>
              <Icon s={12} vb={12}><path d={d} fill="#4a4a4a" stroke="#4a4a4a" strokeWidth={i === 0 || i === 4 ? 1 : 0.5} /></Icon>
            </PlayerButton>
          ))}
        </Player>
        <TimelineTrack>
          <TimelineItem><TlSketch /></TimelineItem>
          <TimelineItem><TlSweep /></TimelineItem>
          <TimelineItem><TlSketch /></TimelineItem>
          <TimelineItem><TlExtrude /></TimelineItem>
          <TimelineItem><TlPattern /></TimelineItem>
          <TimelineItem><TlSketch /></TimelineItem>
          <TimelineItem><TlExtrude /></TimelineItem>
          <TrackMarks width="140" height="38">
            <path d="M9.500 29.500H121.500M9.500 26v3.500M28 26v3.500M47 26v3.500M66 26v3.500M84.500 26v3.500M103 26v3.500M121.500 26v3.500" stroke="#bdbdbd" fill="none" />
            <path d="M128 9h9l-3 4h-3z" fill="#555" />
            <rect x="131.500" y="11" width="2" height="22" fill="#666" />
          </TrackMarks>
        </TimelineTrack>
        <TimelineGear><Gear /></TimelineGear>
      </Timeline>

      <Taskbar>
        <Weather>
          <Icon s={20} vb={20}>
            <path d="M13 2a8.500 8.500 0 1 1-11 11q7 2 11-11z" fill="#f2a23a" />
          </Icon>
          <WeatherText>37°F<WeatherSub>Clear</WeatherSub></WeatherText>
        </Weather>
        <TaskCell $w={34}>
          <Icon s={19} vb={19}>
            <rect x="1" y="1" width="8" height="8" fill="#6fd0f5" />
            <rect x="10" y="1" width="8" height="8" fill="#4cbcef" />
            <rect x="1" y="10" width="8" height="8" fill="#3eaee8" />
            <rect x="10" y="10" width="8" height="8" fill="#2a98dc" />
          </Icon>
        </TaskCell>
        <SearchPill>
          <Icon s={11} vb={11}><circle cx="4.500" cy="4.500" r="3.600" fill="none" stroke="#e4e4e4" /><path d="M7 7l3.500 3.500" stroke="#e4e4e4" strokeWidth="1.200" /></Icon>
          Search
        </SearchPill>
        {TaskIcons.map((ico, i) => (
          <TaskCell key={i}>{ico}{(i === 2 || i === 5) && <RunDot />}</TaskCell>
        ))}
        <TaskCell><FusionTask /></TaskCell>
        <TaskCell $active><FusionTask /><RunDot $active /></TaskCell>
        <Tray>
          <TrayIcon><Chevron /></TrayIcon>
          <TrayIcon>
            <Icon s={13} vb={13}><rect x="1" y="1" width="9" height="10" rx="2" fill="#1da7b8" /><text x="5.500" y="9" fontSize="8" fill="#fff" textAnchor="middle" fontFamily="Liberation Sans">e</text><circle cx="10" cy="10.500" r="2.500" fill="#f0a020" /></Icon>
          </TrayIcon>
          <TrayIcon>
            <Icon s={14} vb={14}><path d="M1 8q0-5 5-5t6 4H4q-2 0-3 1z" fill="#aaa" /><path d="M1 8h9v3H2z" fill="#777" /><circle cx="10" cy="10" r="3.200" fill="#d93a3a" /><path d="M8.800 8.800l2.400 2.400m0-2.400-2.400 2.400" stroke="#fff" strokeWidth=".7" /></Icon>
          </TrayIcon>
          <TrayIcon>
            <Icon s={14} vb={14}>
              {[[2, 2], [6, 2], [10, 2], [2, 6], [6, 6]].map(([x, y]) => <circle key={x + '' + y} cx={x} cy={y} r="1.500" fill="#ddd" />)}
              <circle cx="9.500" cy="9.500" r="3.400" fill="#d93a3a" />
              <path d="M8.300 8.300l2.400 2.400m0-2.400-2.400 2.400" stroke="#fff" strokeWidth=".7" />
            </Icon>
          </TrayIcon>
          <TrayIcon>
            <Icon s={13} vb={13}><path d="M1 5q5.500-4.500 11 0M2.800 7q3.700-3 7.400 0M4.600 9q1.900-1.500 3.800 0" fill="none" stroke="#e4e4e4" strokeWidth="1" /><circle cx="6.500" cy="11" r="1" fill="#e4e4e4" /></Icon>
          </TrayIcon>
          <TrayIcon>
            <Icon s={13} vb={13}><path d="M1 5h2l3-3v9L3 8H1z" fill="none" stroke="#e4e4e4" strokeWidth=".9" /><path d="M8 4.500q1.500 2 0 4M10 3q2.500 3.500 0 7" fill="none" stroke="#e4e4e4" strokeWidth=".9" /></Icon>
          </TrayIcon>
          <TrayIcon>
            <Icon s={14} vb={14}><rect x="1" y="4" width="10.500" height="7" rx="1" fill="none" stroke="#e4e4e4" /><rect x="12" y="6" width="1.300" height="3" fill="#e4e4e4" /><path d="M4 1v5M7 1v5" stroke="#e4e4e4" /><rect x="2.500" y="6" width="7" height="3.500" fill="#e4e4e4" /></Icon>
          </TrayIcon>
          <Clock>6:33 PM<br />2/18/2023</Clock>
          <Badge>26</Badge>
        </Tray>
      </Taskbar>
    </Page>
  )
}

export default App
